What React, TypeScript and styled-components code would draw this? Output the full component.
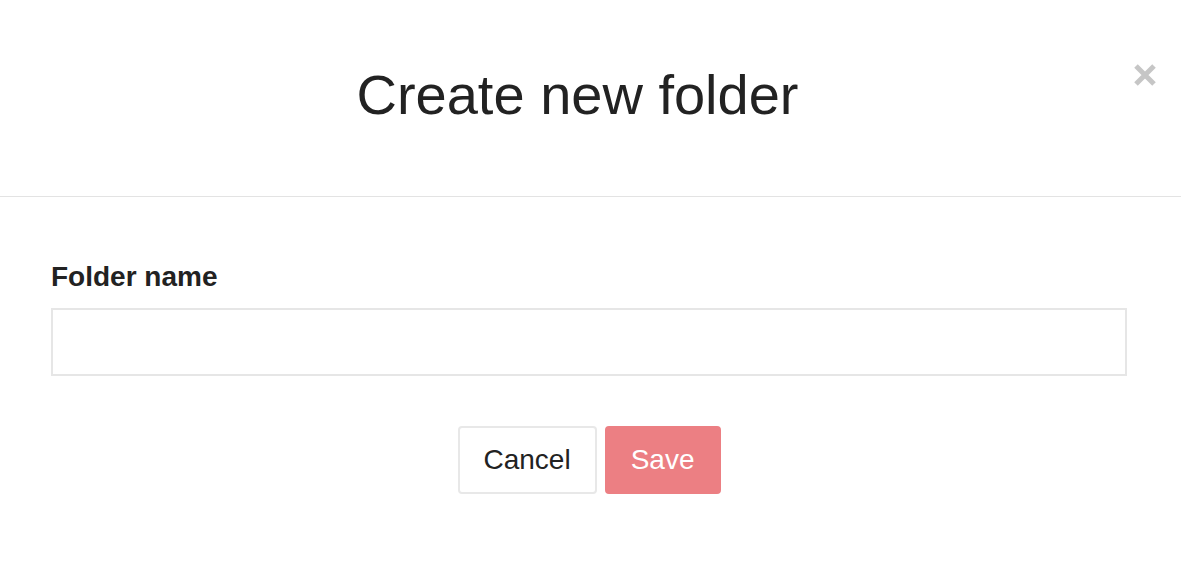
import React from 'react';
import styled, { createGlobalStyle } from 'styled-components';

const GlobalStyle = createGlobalStyle`
  html, body {
    margin: 0;
    padding: 0;
    background: #fff;
  }
  body {
    font-family: "Liberation Sans", Arial, Helvetica, sans-serif;
    color: #222;
  }
`;

const Modal = styled.div`
  width: 1181px;
  height: 563px;
  background: #fff;
`;

const Header = styled.header`
  display: flex;
  align-items: flex-start;
  height: 196px;
  border-bottom: 1px solid #e3e3e3;
  padding-left: 22px;
  padding-right: 24px;
`;

const Title = styled.h1`
  flex: 1;
  margin: 0;
  padding-top: 63px;
  text-align: center;
  font-size: 56px;
  font-weight: 400;
  line-height: 64px;
  color: #222;
`;

const CloseButton = styled.button`
  width: 24px;
  height: 24px;
  margin-top: 63px;
  padding: 0;
  border: none;
  background: none;
  cursor: pointer;
  display: flex;

  svg {
    display: block;
  }
`;

const Body = styled.div`
  padding: 64px 54px 0 51px;
`;

const Label = styled.label`
  display: block;
  font-size: 28px;
  font-weight: 700;
  line-height: 32px;
  color: #222;
  margin-bottom: 15px;
`;

const Input = styled.input`
  display: block;
  box-sizing: border-box;
  width: 100%;
  height: 68px;
  border: 2px solid #e6e6e6;
  border-radius: 0;
  padding: 0 16px;
  font-family: inherit;
  font-size: 24px;
  outline: none;
`;

const Actions = styled.div`
  display: flex;
  justify-content: center;
  gap: 8px;
  margin-top: 50px;
`;

const Button = styled.button<{ $primary?: boolean }>`
  box-sizing: border-box;
  height: 68px;
  padding: 0 24px;
  border-radius: 4px;
  border: 2px solid ${(p) => (p.$primary ? '#ec7f83' : '#e8e8e8')};
  background: ${(p) => (p.$primary ? '#ec7f83' : '#fff')};
  color: ${(p) => (p.$primary ? '#fff' : '#222')};
  font-family: inherit;
  font-size: 28px;
  cursor: pointer;
`;

const App: React.FC = () => {
  return (
    <>
      <GlobalStyle />
      <Modal>
        <Header>
          <Title>Create new folder</Title>
          <CloseButton aria-label="Close">
            <svg width="24" height="24" viewBox="0 0 24 24">
              <path
                d="M3 3 L21 21 M21 3 L3 21"
                stroke="#c6c6c6"
                strokeWidth="5"
                strokeLinecap="butt"
              />
            </svg>
          </CloseButton>
        </Header>
        <Body>
          <Label htmlFor="folder-name">Folder name</Label>
          <Input id="folder-name" type="text" />
          <Actions>
            <Button>Cancel</Button>
            <Button $primary>Save</Button>
          </Actions>
        </Body>
      </Modal>
    </>
  );
};

export default App;
